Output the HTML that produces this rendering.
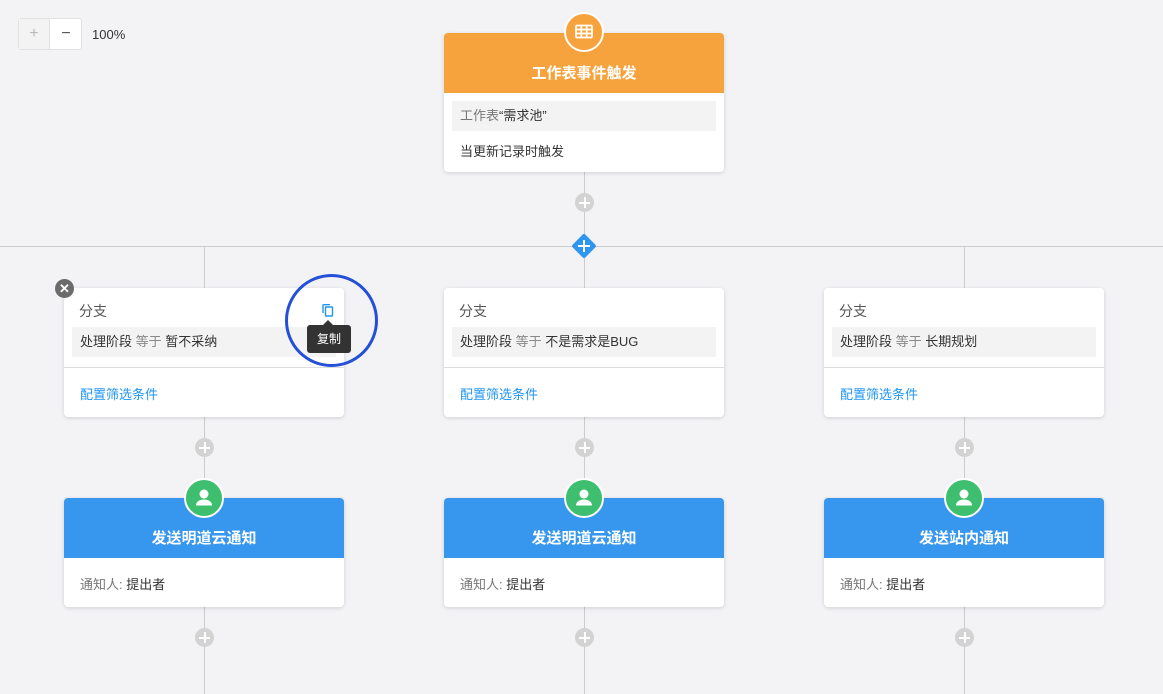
<!DOCTYPE html>
<html><head><meta charset="utf-8"><style>
*{margin:0;padding:0;box-sizing:border-box}
body{width:1163px;height:694px;background:#f3f3f6;position:relative;overflow:hidden;font-family:"Liberation Sans","Noto Sans CJK SC",sans-serif;color:#333}
.a{position:absolute}
.vl{position:absolute;width:1px;background:#ccc}
.card{position:absolute;background:#fff;border-radius:4px;box-shadow:0 1px 4px rgba(0,0,0,.14);overflow:hidden}
.plus{position:absolute;width:19px;height:19px;border-radius:50%;background:#d3d3d3}
.plus:before{content:"";position:absolute;left:4px;top:8.5px;width:11px;height:2px;background:#fff}
.plus:after{content:"";position:absolute;left:8.5px;top:4px;width:2px;height:11px;background:#fff}
.hd{position:absolute;left:0;right:0;top:0;height:60px;color:#fff;font-size:15px;font-weight:bold;text-align:center;line-height:16px;padding-top:33px}
.ic{position:absolute;width:40px;height:40px;border-radius:50%;border:2px solid #fff}
.row{position:absolute;left:8px;right:8px;background:#f3f3f3;font-size:13px;line-height:30px;padding-left:8px}
</style></head><body>
<div class="a" style="left:18px;top:18px;width:64px;height:32px;background:#fff;border:1px solid #e2e2e2;border-radius:3px"></div>
<div class="a" style="left:19px;top:19px;width:31px;height:30px;background:#f3f3f3;border-right:1px solid #e2e2e2;color:#bbb;font-size:16px;text-align:center;line-height:30px">+</div>
<div class="a" style="left:51px;top:19px;width:30px;height:30px;color:#555;font-size:16px;text-align:center;line-height:29px">−</div>
<div class="a" style="left:92px;top:27px;font-size:13px;color:#333">100%</div>

<div class="vl" style="left:584px;top:170px;height:76px"></div>
<div class="a" style="left:0;top:246px;width:1163px;height:1px;background:#ccc"></div>
<div class="vl" style="left:204px;top:246px;height:448px"></div>
<div class="vl" style="left:584px;top:246px;height:448px"></div>
<div class="vl" style="left:964px;top:246px;height:448px"></div>

<div class="card" style="left:444px;top:33px;width:280px;height:139px">
 <div class="hd" style="background:#f7a33d">工作表事件触发</div>
 <div class="row" style="top:68px;height:30px;color:#777">工作表<span style="color:#333">“需求池”</span></div>
 <div class="a" style="left:16px;top:108px;font-size:13px">当更新记录时触发</div>
</div>
<div class="ic" style="left:564px;top:12px;background:#f7a33d"><svg width="36" height="36" viewBox="0 0 36 36" style="position:absolute;left:0;top:0"><g fill="none" stroke="#fff" stroke-width="1.7"><rect x="10" y="11.5" width="16" height="12" rx="1"/><path d="M10 15.5h16M10 19.5h16M15.3 11.5v12M20.7 11.5v12"/></g></svg></div>
<div class="plus" style="left:575px;top:193px"></div>
<div class="a" style="left:575px;top:237px;width:18px;height:18px;background:#2f96ef;transform:rotate(45deg);border-radius:2px"></div>
<div class="a" style="left:578px;top:245px;width:12px;height:2px;background:#fff"></div>
<div class="a" style="left:583px;top:240px;width:2px;height:12px;background:#fff"></div>

<div class="card" style="left:64px;top:288px;width:280px;height:129px">
 <div class="a" style="left:15px;top:13px;font-size:14px;color:#555">分支</div>
 <div class="row" style="top:39px;height:30px">处理阶段 <span style="color:#888">等于</span> 暂不采纳</div>
 <div class="a" style="left:0;right:0;top:79px;height:1px;background:#ddd"></div>
 <div class="a" style="left:16px;top:96px;font-size:13px;color:#2196f3">配置筛选条件</div>
</div>
<div class="card" style="left:444px;top:288px;width:280px;height:129px">
 <div class="a" style="left:15px;top:13px;font-size:14px;color:#555">分支</div>
 <div class="row" style="top:39px;height:30px">处理阶段 <span style="color:#888">等于</span> 不是需求是BUG</div>
 <div class="a" style="left:0;right:0;top:79px;height:1px;background:#ddd"></div>
 <div class="a" style="left:16px;top:96px;font-size:13px;color:#2196f3">配置筛选条件</div>
</div>
<div class="card" style="left:824px;top:288px;width:280px;height:129px">
 <div class="a" style="left:15px;top:13px;font-size:14px;color:#555">分支</div>
 <div class="row" style="top:39px;height:30px">处理阶段 <span style="color:#888">等于</span> 长期规划</div>
 <div class="a" style="left:0;right:0;top:79px;height:1px;background:#ddd"></div>
 <div class="a" style="left:16px;top:96px;font-size:13px;color:#2196f3">配置筛选条件</div>
</div>

<div class="a" style="left:55px;top:279px;width:19px;height:19px;border-radius:50%;background:#6b6b6b;color:#fff;font-size:13px;font-weight:bold;text-align:center;line-height:19px">✕</div>
<svg class="a" style="left:320px;top:302px" width="16" height="16" viewBox="0 0 16 16"><g fill="none" stroke="#2196f3" stroke-width="1.4"><path d="M3 11V3.5C3 3 3.3 2.7 3.8 2.7H10"/><rect x="5.5" y="5" width="7" height="9" rx="0.5"/></g></svg>
<div class="a" style="left:323px;top:320px;width:0;height:0;border:5px solid transparent;border-bottom-color:#333;border-top:0"></div>
<div class="a" style="left:307px;top:325px;width:44px;height:28px;background:#333;border-radius:3px;color:#fff;font-size:12px;text-align:center;line-height:28px">复制</div>
<div class="a" style="left:285px;top:274px;width:93px;height:93px;border-radius:50%;border:3px solid #2450d8"></div>

<div class="plus" style="left:195px;top:438px"></div>
<div class="plus" style="left:575px;top:438px"></div>
<div class="plus" style="left:955px;top:438px"></div>

<div class="card" style="left:64px;top:498px;width:280px;height:109px"><div class="hd" style="background:#3796ee">发送明道云通知</div><div class="a" style="left:16px;top:76px;font-size:13px"><span style="color:#777">通知人:</span> 提出者</div></div>
<div class="card" style="left:444px;top:498px;width:280px;height:109px"><div class="hd" style="background:#3796ee">发送明道云通知</div><div class="a" style="left:16px;top:76px;font-size:13px"><span style="color:#777">通知人:</span> 提出者</div></div>
<div class="card" style="left:824px;top:498px;width:280px;height:109px"><div class="hd" style="background:#3796ee">发送站内通知</div><div class="a" style="left:16px;top:76px;font-size:13px"><span style="color:#777">通知人:</span> 提出者</div></div>
<div class="ic" style="left:184px;top:478px;background:#3dbf6f"><svg width="36" height="36" viewBox="0 0 36 36"><circle cx="18" cy="14" r="4.5" fill="#fff"/><path d="M10 25.5c0-4.5 4.5-6 8-6s8 1.5 8 6z" fill="#fff"/></svg></div>
<div class="ic" style="left:564px;top:478px;background:#3dbf6f"><svg width="36" height="36" viewBox="0 0 36 36"><circle cx="18" cy="14" r="4.5" fill="#fff"/><path d="M10 25.5c0-4.5 4.5-6 8-6s8 1.5 8 6z" fill="#fff"/></svg></div>
<div class="ic" style="left:944px;top:478px;background:#3dbf6f"><svg width="36" height="36" viewBox="0 0 36 36"><circle cx="18" cy="14" r="4.5" fill="#fff"/><path d="M10 25.5c0-4.5 4.5-6 8-6s8 1.5 8 6z" fill="#fff"/></svg></div>

<div class="plus" style="left:195px;top:628px"></div>
<div class="plus" style="left:575px;top:628px"></div>
<div class="plus" style="left:955px;top:628px"></div>
</body></html>
